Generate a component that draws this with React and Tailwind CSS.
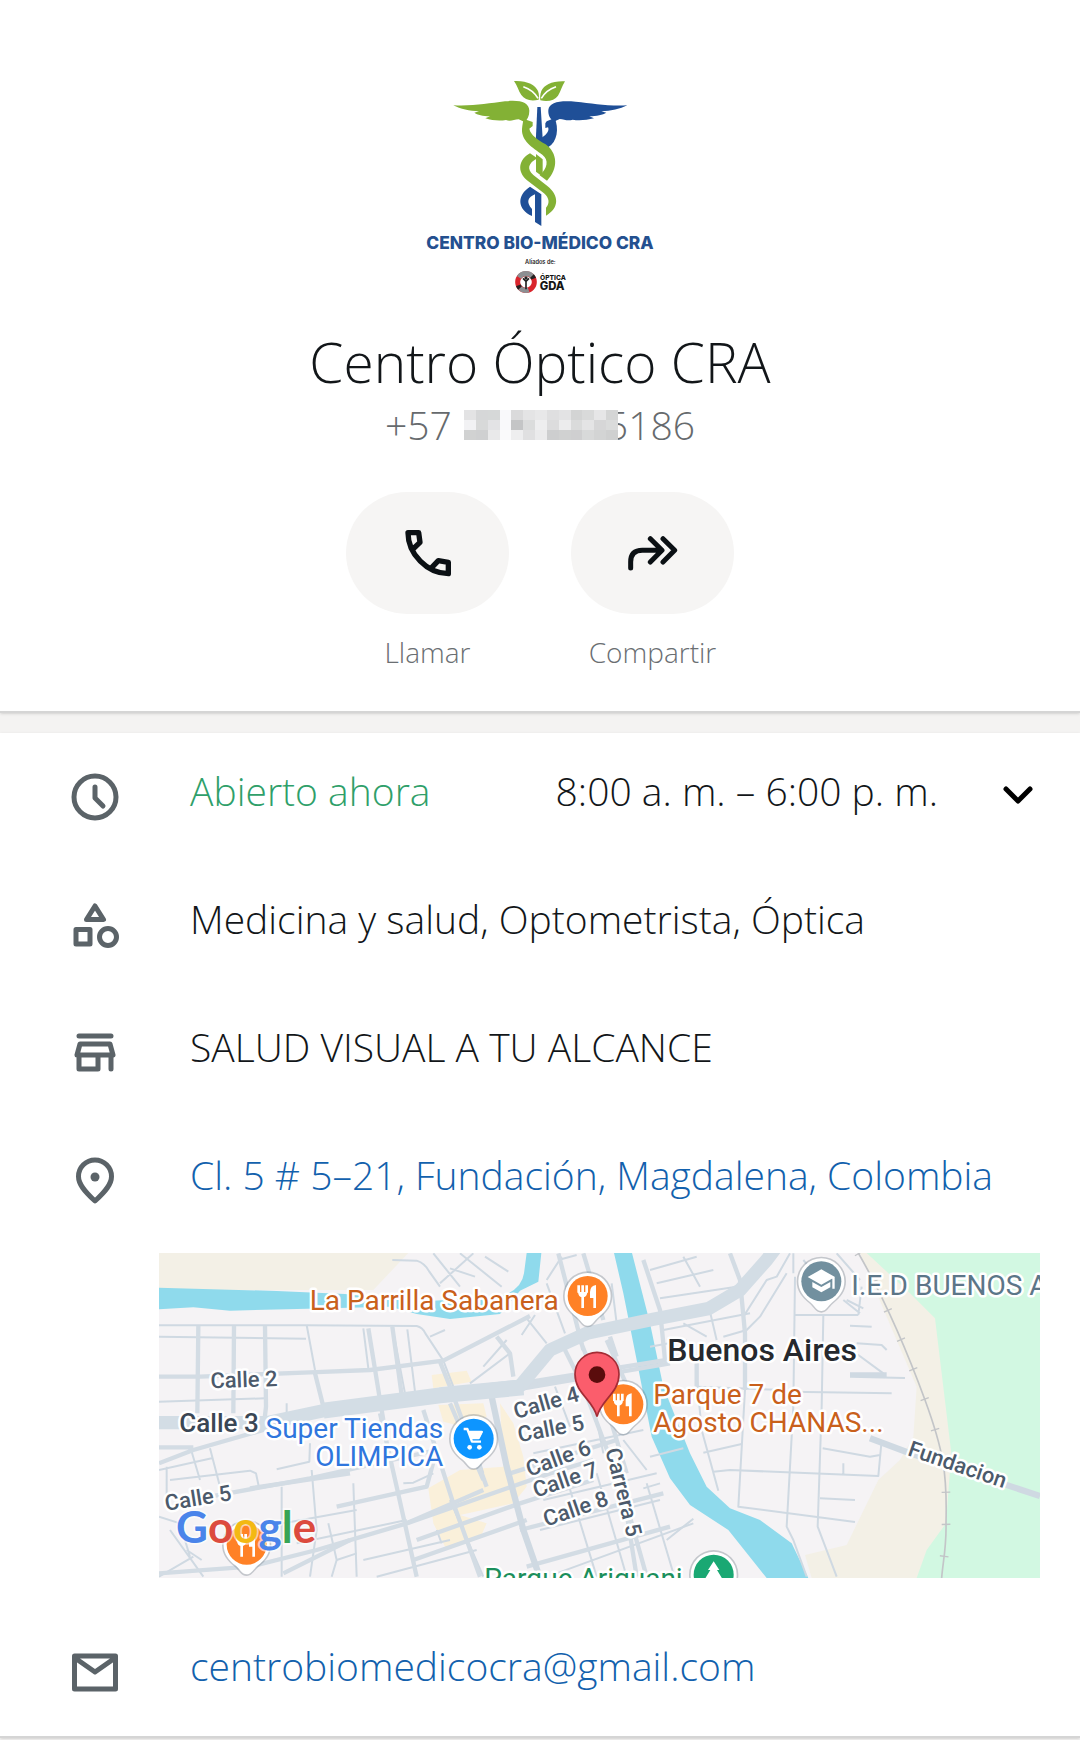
import { useState } from 'react';

const phoneMosaic = [
  ['#e3e3e4', '#d6d7d8', '#d6d8d8', '#f9f9fb', '#dadadb', '#e4e4e5', '#e8e8e9', '#dfdfe0', '#e3e3e4', '#d3d4d4', '#d9dada', '#e6e6e7', '#d4d5d5'],
  ['#f2f2f4', '#d8d9d9', '#e3e3e5', '#f9f9fb', '#c4c5c6', '#dbdcdc', '#eeeeef', '#dcdcdd', '#ececed', '#dadbdb', '#e4e4e5', '#d6d6d7', '#dadbdb'],
  ['#d1d2d2', '#cfd0d1', '#e9e9ea', '#fafafb', '#eeeeef', '#e0e0e1', '#ebebec', '#cdcecf', '#d0d1d1', '#cfcfd0', '#d8d9d9', '#d3d4d4', '#cfd0d0'],
];

const ICON = 'h-12 w-12 shrink-0 text-[#5b6368]';

const Logo = () => (
  <svg viewBox="0 0 780 750" className="h-[250px] w-[260px]" role="img" aria-label="Centro Bio-Médico CRA">
    {/* Leaves */}
    <g fill="#83b135">
      <path d="M312 63C350 61 376 74 384 93C388 103 387 113 386 119C362 125 344 119 334 105C325 93 322 76 312 63Z" />
      <path d="M465 64C427 62 402 75 394 93C390 103 390 113 391 121C415 126 434 121 444 107C453 93 456 77 465 64Z" />
    </g>
    <path d="M340 80Q370 90 384 115M438 80Q408 90 394 115" fill="none" stroke="#fff" strokeWidth="5" />
    {/* Wings */}
    <path
      d="M130 136C190 139 235 130 285 124C330 119 357 127 358 152C358 168 352 178 344 186L326 178C312 179 300 185 288 180C267 184 246 181 226 175L240 169C218 168 202 165 193 158L207 154C179 153 151 147 130 136Z"
      fill="#83b135"
    />
    <path
      d="M652 136C594 139 547 130 497 125C450 121 418 126 415 150C414 166 421 178 431 185L449 177C462 178 474 184 488 179C508 183 530 180 552 175L538 169C560 168 578 165 589 158L574 154C603 153 630 147 652 136Z"
      fill="#1f4f97"
    />
    {/* Staff */}
    <path d="M382 141H392L398 236L377 250Z" fill="#1f4f97" />
    <path d="M410 184L434 174C447 204 443 246 414 262L382 242L401 229C416 218 417 208 414 202L406 204V190Z" fill="#1f4f97" />
    <path d="M378 282L398 298V350L378 335Z" fill="#83b135" />
    {/* Snakes */}
    <path d="M340 176L368 186V198L358 206C362 226 384 239 407 253C443 279 446 326 411 362L389 346C412 325 418 300 397 284C366 262 334 242 336 207C337 193 340 185 340 176Z" fill="#83b135" />
    <path d="M360 280L382 295C354 310 350 327 370 345L413 379C448 407 448 445 408 467V443C420 430 418 414 402 400L351 361C320 334 326 299 360 280Z" fill="#83b135" />
    <path d="M360 380L394 403V498L375 486V403C354 412 347 426 366 447V468C321 447 320 406 360 380Z" fill="#1f4f97" />
    <text x="390" y="568" textAnchor="middle" fontFamily="Inter, sans-serif" fontWeight="800" fontSize="52" fill="#24508f">
      CENTRO BIO-MÉDICO CRA
    </text>
    <text x="391" y="611" textAnchor="middle" fontFamily="Inter, sans-serif" fontWeight="600" fontSize="17" fill="#222">
      Aliados de:
    </text>
    {/* Partner badge */}
    <g fill="none" strokeWidth="15">
      <circle cx="348" cy="666" r="25" stroke="#d9252c" />
      <path d="M327 652A25 25 0 0 1 368 651" stroke="#8d8f92" />
      <path d="M356 690A25 25 0 0 1 330 684" stroke="#8d8f92" />
      <path d="M366 648A25 25 0 0 1 371 656M330 684A25 25 0 0 1 325 676" stroke="#222" />
      <path d="M348 688V663M339 655L348 664L357 655" stroke="#222" strokeWidth="5" />
    </g>
    <circle cx="348" cy="654" r="5" fill="#222" />
    <g fontFamily="Inter, sans-serif" fontWeight="800" fill="#151515">
      <text x="390" y="661" fontSize="20">ÓPTICA</text>
      <text x="389" y="689" fontSize="34">GDA</text>
    </g>
  </svg>
);

const PhoneIcon = () => (
  <svg viewBox="217 144 150 150" className="h-[50px] w-[50px]" fill="none" stroke="#0b1014" strokeWidth="16" strokeLinejoin="round" strokeLinecap="round">
    <path d="M247 207L268 187L264 158H232C232 222 290 281 353 281V247L323 242L303 263" />
  </svg>
);

const ShareIcon = () => (
  <svg viewBox="893 144 150 150" className="h-[50px] w-[50px]" fill="none" stroke="#0b1014" strokeWidth="15" strokeLinejoin="round" strokeLinecap="round">
    <path d="M901 264V246Q901 211 936 211H992M960 176L995 211L960 246M998 176L1033 211L998 246" />
  </svg>
);

const ClockIcon = () => (
  <svg viewBox="0 0 48 48" className={ICON} fill="none" stroke="currentColor" strokeWidth="5">
    <circle cx="24" cy="24" r="21" />
    <path d="M24 14V25L32 33" strokeLinecap="round" strokeLinejoin="round" />
  </svg>
);

const CategoryIcon = () => (
  <svg viewBox="0 0 48 48" className={ICON} fill="none" stroke="currentColor" strokeWidth="5" strokeLinejoin="round">
    <path d="M24 5L32.5 18.5H15.5Z" />
    <path d="M5 28.5H19V43H5Z" />
    <circle cx="37" cy="36" r="8.5" />
  </svg>
);

const StoreIcon = () => (
  <svg viewBox="0 0 48 48" className={ICON} fill="none" stroke="currentColor" strokeWidth="5" strokeLinejoin="round" strokeLinecap="round">
    <path d="M8 7H40M9 15H39L42 26H6ZM8 26V40H27V26M40 26V40" />
  </svg>
);

const PinIcon = () => (
  <svg viewBox="0 0 48 48" className={ICON} fill="none" stroke="currentColor" strokeWidth="5" strokeLinejoin="round">
    <path d="M24 44C13 34 7.5 27 7.5 19.5A16.5 16.5 0 0 1 40.5 19.5C40.5 27 35 34 24 44Z" />
    <circle cx="24" cy="20" r="4.5" fill="currentColor" stroke="none" />
  </svg>
);

const MailIcon = () => (
  <svg viewBox="0 0 48 48" className={ICON} fill="none" stroke="currentColor" strokeWidth="5" strokeLinejoin="round">
    <path d="M3.5 8H44.5V41H3.5ZM4 10L24 24L44 10" />
  </svg>
);

const Poi = ({ x, y, color, children }) => (
  <g transform={`translate(${x} ${y})`}>
    <path d="M0 94C-16 94 -22 78 -36 66C-58 48 -74 30 -74 0A74 74 0 0 1 74 0C74 30 58 48 36 66C22 78 16 94 0 94Z" fill="#6b7680" opacity=".35" />
    <path d="M0 89C-14 89 -20 74 -34 62C-54 46 -69 28 -69 0A69 69 0 0 1 69 0C69 28 54 46 34 62C20 74 14 89 0 89Z" fill="#fff" />
    <circle r="60" fill={color} />
    {children}
  </g>
);

const Cutlery = () => (
  <g fill="none" stroke="#fff" strokeWidth="8">
    <path d="M-27 -32V-10M-15 -32V36M-3 -32V-10" />
    <path d="M-29 -12H-1Q-2 4 -15 4Q-28 4 -29 -12Z" fill="#fff" stroke="none" />
    <path d="M25 -33V36H17V6H7V-12Q8 -31 25 -33Z" fill="#fff" stroke="none" />
  </g>
);

// Streets are grouped by drawn width
const lanes = [
  'M27 256H465L800 258Q818 262 826 280L880 362L910 440',
  'M27 290L468 296',
  'M727 60L800 62Q825 70 838 95L870 140M850 40L930 140M870 130L970 40M900 85L975 110M930 40L1055 140M1005 50L1075 95',
  'M840 290L885 270M640 265L655 385M772 268L795 455M727 260L765 460M470 255L495 390',
  'M27 485L345 475M410 490V520M380 688L478 665L480 610',
  'M180 625L210 740M125 635L150 720M27 690L185 655M50 680V800M60 720L300 692L318 700L326 738',
  'M27 830L90 850L120 950M60 870L160 1010M110 930L155 960M27 1010L130 950M535 850L560 960L545 1010',
  'M395 740V1010M485 690L500 870L480 1010M400 850L620 810M440 910L770 840M610 730L620 1010M760 730L790 728L850 700M860 870L875 910',
  'M1000 380L1070 300M960 430L1080 340M1130 235L1190 310M1115 285L1155 225M1190 130L1245 280M1190 120L1235 50',
  'M1225 60L1280 45M1400 250L1385 130M1000 700L960 570',
  'M640 960L900 900M680 1010L980 930M560 960L620 940M900 780L1000 1010',
  'M1215 440L1260 560M1320 440L1360 640M1150 640L1480 570M1220 1000L1630 850M1170 870L1530 780M1180 780L1520 700M1340 1010L1230 650M1430 1010L1340 700',
  'M1500 90L1640 50M1520 130L1690 90M1530 175L1760 140M1600 50L1650 140M1540 270L1800 220M1600 250L1670 290',
  'M1490 730L1570 1000M1500 650L1600 625M1480 745L1530 730M1550 900L1630 836M1490 690L1420 600',
  'M1780 230L1850 120L1880 110L1920 40M1720 290L1790 270L1830 230L1910 100M1930 100V40M1960 60L2010 120',
  'M1932 225H2125M1935 110L1930 500L1910 860L1930 900L1970 1010M2020 225L2015 500L2003 860L2060 1010M1785 450L1765 800L2115 846',
  'M1640 410L1655 570L1705 752M1690 695L1740 690L2185 708L2195 600M1660 638L1775 612M2018 625L2160 650L2190 645M2010 775L2115 780M2080 670V705',
  'M1920 455L2225 460M2100 410L2265 414M2060 330L2125 345L2200 400M2120 310L2195 315L2210 330M2100 257L2165 260',
  'M2125 225L2135 140M2130 220L2080 180M2090 180L2140 205M2060 40L2130 120',
  'M1680 215L1700 300M1500 320L1610 300M1640 440L1900 450',
];

const streets = [
  'M27 410H150L480 397L660 390L880 362L1140 228',
  'M145 258L142 520M252 258L250 520M345 258L348 500L340 570L130 630L27 670M27 622H130',
  'M495 400L525 520M655 265L690 480L700 540M727 260L755 465M870 365L900 440L1010 740',
  'M690 520L740 740L800 1010M300 745L600 700M27 1000L300 980L500 930L770 850L1000 750',
  'M180 770L480 715L860 630M400 1000L600 900M560 800L830 740L860 630M770 850L1200 700L1330 660M800 900L1110 790L1330 720',
  'M790 960L1130 840M1040 290L1080 340L1090 410M820 510L910 790L990 1010M900 490L1000 720',
  'M1225 40L1300 330M1300 40L1360 240M1230 300L1300 440L1420 760L1490 1010M1290 300L1370 500L1430 700',
  'M1110 435L1330 400M1120 445L1560 370M1110 870L1540 760M1080 700L1400 600M1370 300L1450 480',
  'M1480 60L1530 210L1545 360M1740 40L1770 120L1785 280V450M1640 370V440M1380 290L1400 350M1430 820L1460 1010',
  'M1110 430L1550 360M1130 980L1560 860',
];

const Map = () => (
  <svg viewBox="27 39 2643 975" className="block w-full" role="img" aria-label="Mapa de Fundación, Magdalena" fontFamily="Roboto, sans-serif" fontWeight="400">
    <path d="M27 39H2670V1014H27Z" fill="#f5f3f5" />
    {/* Land cover */}
    <path d="M27 39H775L670 150H27Z" fill="#f3f0e6" />
    <path d="M2130 39H2230L2370 220L2410 600L2390 880L2310 1014H1985L1965 945L2090 915L2185 720L2250 660L2290 590L2300 440L2210 230Z" fill="#f3f0e6" />
    <path d="M2150 39H2670V1014H2300L2330 930L2388 850L2404 640L2355 235L2280 160Z" fill="#d2f8e2" />
    <g fill="#faf0da">
      <path d="M845 405L950 392L965 425L850 445ZM865 495L1000 490L1010 530L940 560L880 545Z" />
      <path d="M1050 490L1090 550L1120 650L1130 740L1090 790L930 825L1010 850L990 895L890 930L850 850L835 745L930 690L1060 680Z" />
    </g>
    {/* River */}
    <g fill="#8fdaec">
      <path d="M27 143L380 153L585 162L800 185L1050 170Q1115 150 1122 100L1130 39H1174L1165 125L1110 152L1050 222L900 237L800 222L720 200L410 208L240 212L130 202L27 208Z" />
      <path d="M1392 39H1446L1500 250L1540 440L1620 640L1670 740L1740 805L1830 840L1925 910L1975 1014H1850L1735 870L1620 795L1560 715L1505 590L1460 360L1420 160Z" />
    </g>
    {/* Roads */}
    <g fill="none" stroke="#cfd9e2" strokeLinejoin="round">
      <g strokeWidth="6">
        {lanes.map((d) => (
          <path key={d} d={d} />
        ))}
      </g>
      <g strokeWidth="13" stroke="#d3dce4">
        {streets.map((d) => (
          <path key={d} d={d} />
        ))}
      </g>
      <path d="M1025 470L1070 680L1120 870L1170 1014M2160 595L2280 640L2670 768" strokeWidth="19" />
      <path d="M2100 404H2210" strokeWidth="14" />
      <path d="M27 548H350L520 512L870 466L1110 438L1200 330L1310 280L1510 238L1675 206L1770 150L1850 60L1880 20" strokeWidth="40" stroke="#d3dde5" />
      <path d="M520 512L870 466L1120 442" strokeWidth="48" stroke="#d3dde5" />
    </g>
    <path d="M2125 39C2200 170 2270 330 2325 480C2380 630 2392 700 2388 850C2390 920 2378 970 2375 1014" fill="none" stroke="#c3c5c8" strokeWidth="5" />
    <path d="M2125 39C2200 170 2270 330 2325 480C2380 630 2392 700 2388 850C2390 920 2378 970 2375 1014" fill="none" stroke="#c3c5c8" strokeWidth="26" strokeDasharray="4 92" />

    {/* Pins */}
    <Poi x={1313} y={168} color="#ff8126">
      <Cutlery />
    </Poi>
    <Poi x={1420} y={493} color="#ff8126">
      <Cutlery />
    </Poi>
    <Poi x={290} y={914} color="#ff8126">
      <Cutlery />
    </Poi>
    <Poi x={971} y={596} color="#0d95ff">
      <path d="M-30 -29H-19L-5 9H22M-14 -20H24L15 -2H-9" fill="none" stroke="#fff" strokeWidth="7" strokeLinejoin="round" />
      <path d="M-14 -22H28L16 0H-8Z" fill="#fff" />
      <circle cx="-12" cy="26" r="7" fill="#fff" />
      <circle cx="17" cy="26" r="7" fill="#fff" />
    </Poi>
    <Poi x={2014} y={124} color="#72909f">
      <path d="M0 -36L41 -13L0 10L-41 -13Z M-27 2L0 17L27 2V18L0 33L-27 18ZM33 -12H40V22H33Z" fill="#fff" />
    </Poi>
    <Poi x={1691} y={1004} color="#1aa873">
      <path d="M0 -40L17 -14H10L27 14H-27L-10 -14H-17Z" fill="#fff" />
    </Poi>

    {/* Labels */}
    <g stroke="#fff" strokeWidth="15" strokeLinejoin="round" paintOrder="stroke" fontSize="84">
      <g fill="#c9601b">
        <text x="1226" y="210" textAnchor="end">La Parrilla Sabanera</text>
        <text x="1510" y="491">Parque 7 de</text>
        <text x="1510" y="577">Agosto CHANAS...</text>
      </g>
      <g fill="#2f76dd" textAnchor="end">
        <text x="880" y="594">Super Tiendas</text>
        <text x="880" y="678">OLIMPICA</text>
      </g>
      <text x="2104" y="165" fill="#5c7688">I.E.D BUENOS A</text>
      <text x="1003" y="1045" fill="#1b8f5c">Parque Ariguani</text>
      <text x="1552" y="362" fontSize="96" fontWeight="500" fill="#26292e">Buenos Aires</text>
      <text x="88" y="577" fontSize="78" fontWeight="500" fill="#3a4654">Calle 3</text>
      <g fontSize="66" fontWeight="500" fill="#4c5a6b">
        <text transform="translate(182 445) rotate(-2)">Calle 2</text>
        <text transform="translate(48 812) rotate(-9)">Calle 5</text>
        <text transform="translate(1098 537) rotate(-16)">Calle 4</text>
        <text transform="translate(1108 607) rotate(-11)">Calle 5</text>
        <text transform="translate(1138 710) rotate(-20)">Calle 6</text>
        <text transform="translate(1158 773) rotate(-19)">Calle 7</text>
        <text transform="translate(1189 860) rotate(-19)">Calle 8</text>
        <text transform="translate(1366 630) rotate(76)">Carrera 5</text>
        <text transform="translate(2270 645) rotate(19)">Fundacion</text>
      </g>
    </g>

    {/* Selected place */}
    <path d="M1341 530C1330 480 1275 460 1275 403A66 66 0 0 1 1407 403C1407 460 1352 480 1341 530Z" fill="#fb5d6c" stroke="#a52c35" strokeWidth="5" />
    <circle cx="1341" cy="404" r="25" fill="#5a0c0c" />

    <text x="78" y="908" fontFamily="Lato, sans-serif" fontSize="132" fontWeight="700" stroke="#fff" strokeWidth="10" strokeOpacity=".6" paintOrder="stroke">
      <tspan fill="#4a84ea">G</tspan>
      <tspan fill="#dc4b3e">o</tspan>
      <tspan fill="#f3b913">o</tspan>
      <tspan fill="#4a84ea">g</tspan>
      <tspan fill="#38a455">l</tspan>
      <tspan fill="#dc4b3e">e</tspan>
    </text>
  </svg>
);

const Action = ({ icon, label }) => (
  <button type="button" className="flex w-[163px] flex-col items-center gap-5">
    <span className="flex h-[122px] w-full items-center justify-center rounded-full bg-[#f6f5f4]">{icon}</span>
    <span className="text-[28px] leading-9 text-[#6a6e72]">{label}</span>
  </button>
);

const Row = ({ icon, children }) => (
  <div className="flex h-32 items-center gap-[71px] pr-[38px] pl-[71px]">
    {icon}
    <div className="flex flex-1 items-center justify-between whitespace-nowrap">{children}</div>
  </div>
);

export default function App() {
  const [open, setOpen] = useState(false);

  return (
    <main className="min-h-screen bg-[#f4f3f2] font-['Open_Sans',sans-serif] font-light text-[#121619]">
      {/* Profile header */}
      <header className="flex flex-col items-center border-b-2 border-[#d5d5d5] bg-white pt-[60px] pb-[41px] shadow-sm">
        <Logo />
        <h1 className="mt-4 text-[55px] leading-[72px] whitespace-nowrap">Centro Óptico CRA</h1>
        <p className="flex h-[54px] items-center text-[39px] whitespace-nowrap text-[#666a6d]">
          <span>+57</span>
          <svg viewBox="0 0 13 3" className="relative z-10 ml-3 h-[30px] w-[154px]" preserveAspectRatio="none" shapeRendering="crispEdges" aria-hidden="true">
            {phoneMosaic.map((row, y) => row.map((fill, x) => <rect key={`${x}-${y}`} x={x} y={y} width="1" height="1" fill={fill} />))}
          </svg>
          <span className="-ml-3">5186</span>
        </p>
        <div className="mt-10 flex gap-[62px]">
          <Action icon={<PhoneIcon />} label="Llamar" />
          <Action icon={<ShareIcon />} label="Compartir" />
        </div>
      </header>

      {/* Business details */}
      <section className="mt-5 border-b-2 border-[#d5d5d5] bg-white text-[39px] leading-[52px] shadow-sm">
        <Row icon={<ClockIcon />}>
          <span className="pb-3 text-[#2f9f6a]">Abierto ahora</span>
          <span className="flex items-center gap-14">
            <span className="pb-3">8:00 a. m. – 6:00 p. m.</span>
            <button type="button" aria-label="Ver horario" aria-expanded={open} onClick={() => setOpen(!open)}>
              <svg viewBox="0 0 48 48" className="h-12 w-12" fill="none" stroke="#000" strokeWidth="5" strokeLinecap="round" strokeLinejoin="round">
                <path d="M12 16L24 28L36 16" />
              </svg>
            </button>
          </span>
        </Row>
        <Row icon={<CategoryIcon />}>
          <span className="pb-3">Medicina y salud, Optometrista, Óptica</span>
        </Row>
        <Row icon={<StoreIcon />}>
          <span className="pb-3">SALUD VISUAL A TU ALCANCE</span>
        </Row>
        <Row icon={<PinIcon />}>
          <a href="#mapa" className="pb-3 text-[#1261ad]">
            Cl. 5 # 5–21, Fundación, Magdalena, Colombia
          </a>
        </Row>
        <div id="mapa" className="pt-2 pr-10 pb-[30px] pl-[159px]">
          <Map />
        </div>
        <Row icon={<MailIcon />}>
          <a href="mailto:centrobiomedicocra@gmail.com" className="pb-3 text-[#1261ad]">
            centrobiomedicocra@gmail.com
          </a>
        </Row>
      </section>
    </main>
  );
}
